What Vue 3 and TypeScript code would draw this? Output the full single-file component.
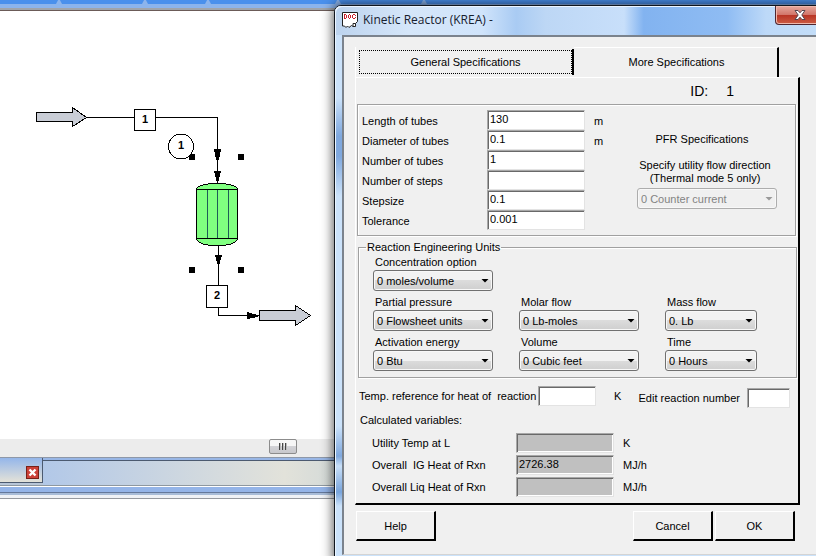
<script setup lang="ts">
import { ref } from 'vue'

interface Field {
  id: string
  label: string
  value: string
  unit: string
}

interface UnitChoice {
  id: string
  label: string
  value: string
}

const geometry = ref<Field[]>([
  { id: 'length', label: 'Length of tubes', value: '130', unit: 'm' },
  { id: 'diameter', label: 'Diameter of tubes', value: '0.1', unit: 'm' },
  { id: 'tubes', label: 'Number of tubes', value: '1', unit: '' },
  { id: 'steps', label: 'Number of steps', value: '', unit: '' },
  { id: 'stepsize', label: 'Stepsize', value: '0.1', unit: '' },
  { id: 'tolerance', label: 'Tolerance', value: '0.001', unit: '' },
])

const units: UnitChoice[] = [
  { id: 'concentration', label: 'Concentration option', value: '0 moles/volume' },
  { id: 'pressure', label: 'Partial pressure', value: '0 Flowsheet units' },
  { id: 'molar', label: 'Molar flow', value: '0 Lb-moles' },
  { id: 'mass', label: 'Mass flow', value: '0. Lb' },
  { id: 'energy', label: 'Activation energy', value: '0 Btu' },
  { id: 'volume', label: 'Volume', value: '0 Cubic feet' },
  { id: 'time', label: 'Time', value: '0 Hours' },
]

const results: Field[] = [
  { id: 'utility', label: 'Utility Temp at L', value: '', unit: 'K' },
  { id: 'ig', label: 'Overall  IG Heat of Rxn', value: '2726.38', unit: 'MJ/h' },
  { id: 'liq', label: 'Overall Liq Heat of Rxn', value: '', unit: 'MJ/h' },
]

const temperature = ref('')
const reactionNumber = ref('')
</script>

<template>
  <div class="desktop">
    <div class="workspace">
      <div class="strip">
        <span class="strip-tab first"></span>
        <span class="strip-tab second"></span>
        <span class="strip-tab third"></span>
        <span class="strip-tab wide"></span>
        <span class="strip-tab last"></span>
      </div>
      <div class="strip-edge"></div>

      <div class="canvas">
        <svg class="flowsheet" width="334" height="428" viewBox="0 11 334 428" shape-rendering="crispEdges">
          <g fill="none" stroke="#000">
            <path d="M86 117.500H217.500V184" />
            <path d="M218.500 244V315.500H260" />
          </g>
          <g fill="#c9cdd6" stroke="#000">
            <path d="M36.500 112.500H72.500V107.500L86.500 117.500L72.500 126.500V121.500H36.500Z" />
            <path d="M259.500 310.500H295.500V305.500L310.500 315.500L295.500 325.500V320.500H259.500Z" />
          </g>
          <g fill="#000">
            <path d="M214 149H221L219 160H216Z" />
            <path d="M214 171H221L218 183H217Z" />
            <path d="M215 255H222L219 266H218Z" />
            <path d="M247 312L258 315V317L247 319Z" />
            <rect x="189" y="154" width="6" height="6" />
            <rect x="238" y="154" width="6" height="6" />
            <rect x="189" y="267" width="6" height="6" />
            <rect x="238" y="267" width="6" height="6" />
          </g>
          <path d="M196.500 189C197 186 205 183.500 217 183.500S237 186 237.500 189V239C236 243 228 245.500 217 245.500S198 243 196.500 239Z" fill="#80ff80" stroke="#000" />
          <path d="M196.500 189.500H237.500M196.500 238.500H237.500" fill="none" stroke="#000" />
          <path d="M207.500 190V238M217.500 190V238M228.500 190V238" fill="none" stroke="#1d5c58" />
          <g fill="#fff" stroke="#000">
            <rect x="134.500" y="109.500" width="21" height="21" />
            <circle cx="181" cy="146.500" r="12.500" />
            <rect x="206.500" y="285.500" width="21" height="22" />
          </g>
          <g class="tag" text-anchor="middle">
            <text x="145" y="123">1</text>
            <text x="181" y="149">1</text>
            <text x="217" y="299">2</text>
          </g>
        </svg>
      </div>

      <div class="scrollbar">
        <div class="thumb"><i></i><i></i><i></i></div>
      </div>

      <div class="taskbar">
        <div class="task">
          <button class="task-close" type="button" aria-label="Close tab">
            <svg width="9" height="9" viewBox="0 0 9 9"><path d="M1.500 1.500L7.500 7.500M7.500 1.500L1.500 7.500" stroke="#fff" stroke-width="2.400" /></svg>
          </button>
        </div>
        <div class="task-rest"></div>
      </div>
      <div class="divider"></div>
      <div class="lower"></div>
    </div>

    <section class="dialog">
      <header class="titlebar">
        <svg class="doc" width="16" height="16" viewBox="0 0 16 16">
          <path d="M.5 .5H15.500V9.500L13.500 11.500V14.500H11L9.500 13.500L7 15.500L5.500 14L4 15.500L2.500 14H.5Z" fill="#fff" stroke="#222" />
          <g fill="none" stroke="#c8202c" shape-rendering="crispEdges">
            <path d="M2.500 2V7M2 2.500H4M2 6.500H4M4.500 3V6" />
            <path d="M6.500 3V6M8.500 3V6M7 2.500H8M7 6.500H8" />
            <path d="M10.500 3V6M11 2.500H13M11 6.500H13M13.500 3V4M13.500 5V6" />
          </g>
          <path d="M11 14V11.500H13.500" fill="none" stroke="#222" />
        </svg>
        <h1>Kinetic Reactor (KREA) -</h1>
        <button class="close" type="button" aria-label="Close">
          <svg width="12" height="10" viewBox="0 0 12 10">
            <path d="M1 .5H4L6 2.800L8 .5H11L7.800 5L11 9.500H8L6 7.200L4 9.500H1L4.200 5Z" fill="#fff" stroke="#55464e" />
          </svg>
        </button>
      </header>

      <div class="client">
        <div class="tabs">
          <button class="tab general" type="button"><span>General Specifications</span></button>
          <button class="tab more" type="button">More Specifications</button>
        </div>

        <div class="page">
          <div class="ident"><span>ID:</span><span>1</span></div>

          <div class="group specs">
            <div class="fields">
              <div v-for="f in geometry" :key="f.id" class="field">
                <label :for="f.id">{{ f.label }}</label>
                <input :id="f.id" v-model="f.value" type="text" />
                <span>{{ f.unit }}</span>
              </div>
            </div>
            <div class="pfr">
              <div>PFR Specifications</div>
              <label for="direction">Specify utility flow direction<br />(Thermal mode 5 only)</label>
              <div class="combo off">
                <select id="direction" disabled><option>0 Counter current</option></select>
                <i></i>
              </div>
            </div>
          </div>

          <fieldset class="group units">
            <legend>Reaction Engineering Units</legend>
            <div class="unit-grid">
              <div v-for="u in units" :key="u.id" class="unit" :class="u.id">
                <label :for="u.id">{{ u.label }}</label>
                <div class="combo">
                  <select :id="u.id"><option>{{ u.value }}</option></select>
                  <i></i>
                </div>
              </div>
            </div>
          </fieldset>

          <div class="extra">
            <label for="temperature">Temp. reference for heat of&nbsp; reaction</label>
            <input id="temperature" v-model="temperature" class="temp" type="text" />
            <span>K</span>
            <label class="edit" for="reaction">Edit reaction number</label>
            <input id="reaction" v-model="reactionNumber" class="number" type="text" />
          </div>

          <div class="caption">Calculated variables:</div>
          <div class="results">
            <div v-for="r in results" :key="r.id" class="result">
              <label :for="r.id">{{ r.label }}</label>
              <input :id="r.id" :value="r.value" type="text" readonly />
              <span>{{ r.unit }}</span>
            </div>
          </div>
        </div>

        <div class="actions">
          <button type="button">Help</button>
          <button class="cancel" type="button">Cancel</button>
          <button type="button">OK</button>
        </div>
      </div>
    </section>
  </div>
</template>

<style>
body {
  margin: 0;
}
</style>

<style scoped>
* {
  box-sizing: border-box;
}
.desktop {
  position: relative;
  min-height: 100vh;
  overflow: hidden;
  background: #fff;
  color: #000;
  font: 11px/14px "Liberation Sans", Arial, sans-serif;
}
button,
input,
select {
  margin: 0;
  border-radius: 0;
  color: inherit;
  font: inherit;
}
.workspace {
  display: flex;
  flex-direction: column;
  height: 100vh;
}
.strip {
  display: flex;
  flex: none;
  height: 8px;
  background: linear-gradient(#4a90ec 4px, #8cb4ec 4px);
}
.strip-tab {
  display: flex;
  justify-content: flex-end;
}
.strip-tab::after {
  width: 6px;
  height: 4px;
  background: #8cb4ec;
  clip-path: polygon(35% 0, 65% 0, 100% 100%, 0 100%);
  content: "";
}
.first { width: 62px; }
.second { width: 86px; }
.third { width: 63px; }
.wide { width: 130px; }
.last { width: 86px; }
.strip-edge {
  flex: none;
  height: 3px;
  border-bottom: 1px solid #6b5b58;
  background: #a0a4aa;
}
.canvas {
  flex: 1;
  min-height: 0;
  overflow: hidden;
}
.flowsheet {
  display: block;
}
.tag {
  font: bold 11px "Liberation Sans", sans-serif;
}
.scrollbar {
  display: flex;
  flex: none;
  height: 18px;
  padding-left: 269px;
  background: #ececec;
}
.thumb {
  display: flex;
  justify-content: center;
  align-items: center;
  gap: 1px;
  width: 28px;
  height: 15px;
  border: 1px solid #8c8c8c;
  border-radius: 2px;
  background: linear-gradient(#f6f6f6 50%, #d2d2d6 50%, #c8c8cc);
}
.thumb i {
  width: 2px;
  height: 7px;
  border-left: 1px solid #444;
  background: #bbb;
}
.taskbar {
  display: flex;
  flex: none;
  height: 29px;
  border-top: 1px solid #8e98a8;
  border-bottom: 1px solid #8e98a0;
  background: linear-gradient(#98b6e6 3px, #b8c6d8 3px);
}
.task {
  display: flex;
  justify-content: flex-end;
  align-items: flex-end;
  width: 43px;
  height: 25px;
  padding: 0 3px 3px 0;
  border-right: 1px solid #4c5a70;
  border-bottom: 1px solid #4c5a70;
  background: linear-gradient(#94b6ea, #e4e2d8);
}
.task-close {
  display: flex;
  justify-content: center;
  align-items: center;
  width: 13px;
  height: 13px;
  padding: 0;
  border: 1px solid #782018;
  background: #cc4038;
}
.task-rest {
  width: 291px;
  margin-top: 2px;
  border-top: 1px solid #4c5a70;
  background: linear-gradient(90deg, #b2c8e8, #e2e2da 83%, #d4dad8);
}
.divider {
  flex: none;
  height: 13px;
  border-bottom: 1px solid #96999f;
  background: linear-gradient(#fff 1px, #94b4e8 1px 6px, #65789a 6px 7px, #a8bcd8 7px 9px, #f0f2f6 9px);
}
.lower {
  flex: none;
  height: 57px;
}
.dialog {
  position: absolute;
  top: 5px;
  right: -10px;
  bottom: -6px;
  left: 334px;
  display: flex;
  flex-direction: column;
  padding: 0 8px 6px 7px;
  border: 1px solid #10161e;
  border-radius: 7px 7px 0 0;
  background:
    linear-gradient(#0000 92px, #7fa8de 130px 150px, #0000 190px) 0 0 / 7px 100% no-repeat,
    linear-gradient(#0000 420px, #7fa8de 450px, #c9e0f8 460px, #78a4dc 486px, #0000 500px) 0 0 / 7px 100% no-repeat,
    #cbe2fa;
  box-shadow: 0 0 12px 1px #000a, inset 1px 1px 0 #eaf5ff;
}
.titlebar {
  display: flex;
  flex: none;
  align-items: flex-start;
  gap: 5px;
  height: 29px;
  margin: 0 -8px 0 -7px;
  padding-left: 7px;
  border-radius: 6px 6px 0 0;
  background: linear-gradient(90deg, #bcd3ee, #d5e6f9 15%, #d0e4fb 30%, #a9cbf3 37%, #bdd7f5 43%, #c8dffa 59%, #82b3f0 63%, #8fbcf3 80%, #bdd9f8 88%, #c4def8);
  box-shadow: inset 1px 1px 0 #edf5ff;
}
.doc {
  margin-top: 6px;
}
h1 {
  flex: 1;
  margin: 5px 0 0;
  color: #16202e;
  font: 12px/18px "Open Sans", "Noto Sans", sans-serif;
}
.close {
  display: flex;
  justify-content: center;
  align-items: center;
  width: 50px;
  height: 19px;
  padding: 0;
  border: 1px solid #4f2630;
  border-top: 0;
  border-radius: 0 0 4px 4px;
  background: linear-gradient(#e6a99e, #d2766a 48%, #b83424 50%, #cc5c44);
  box-shadow: inset 0 0 0 1px #f0b8ac;
}
.client {
  flex: 1;
  padding: 10px 17px 12px 11px;
  border: solid #7b838d;
  border-width: 2px 0 0 2px;
  border-bottom: 1px solid #d4d4d4;
  background: #f0f0f0;
}
.tabs {
  display: flex;
  align-items: flex-end;
  height: 30px;
  border-left: 1px solid #fff;
}
.tab {
  padding: 0;
  border: 0;
  background: #f0f0f0;
}
.general {
  width: 218px;
  height: 26px;
  margin-bottom: 2px;
  padding: 1px 0 1px 3px;
  border-right: 2px solid #000;
}
.general span {
  display: block;
  height: 24px;
  border: 1px dotted #000;
  line-height: 22px;
}
.more {
  flex: 1;
  height: 30px;
  max-width: 205px;
  padding: 0 0 2px 2px;
  border-top: 1px solid #fff;
  border-right: 2px solid #000;
}
.page {
  padding: 5px 1px 6px 1px;
  border: 1px solid #fff;
  border-right: 2px solid #000;
  border-bottom: 2px solid #000;
}
.ident {
  display: flex;
  justify-content: flex-end;
  gap: 18px;
  padding-right: 63px;
  font: 14px/16px "Liberation Sans", sans-serif;
}
.group {
  border: 1px solid #a0a0a0;
  box-shadow: 1px 1px 0 #fff, inset 1px 1px 0 #fff;
}
.specs {
  display: flex;
  margin: 5px 1px 0 0;
  padding: 5px 18px 5px 4px;
}
.field {
  display: grid;
  grid-template-columns: 125px 98px 20px;
  height: 20px;
}
.field label {
  padding-top: 4px;
}
.field span {
  padding: 4px 0 0 9px;
}
input {
  height: 20px;
  padding: 0 2px 2px;
  border: 1px solid;
  border-color: #a8a8a8 #e3e3e3 #e3e3e3 #a8a8a8;
  outline: 0;
  background: #fff;
  box-shadow: inset 1px 1px 0 #696969, inset -1px -1px 0 #fff;
}
.field input {
  width: 98px;
}
.pfr {
  display: flex;
  flex-direction: column;
  align-items: center;
  width: 150px;
  margin-left: auto;
  padding-top: 22px;
  text-align: center;
  white-space: nowrap;
}
.pfr label {
  margin: 13px 0 3px 6px;
  line-height: 13px;
}
.pfr .combo {
  width: 140px;
  margin-left: 10px;
}
.combo {
  display: grid;
}
.combo > * {
  grid-area: 1 / 1;
}
select {
  width: 100%;
  height: 21px;
  padding: 0 18px 0 3px;
  border: 1px solid #707070;
  border-radius: 3px;
  appearance: none;
  background: linear-gradient(#f2f2f2 50%, #dcdcdc 50%, #cfcfcf);
  box-shadow: inset 0 0 0 1px #f8f8f8;
}
.combo i {
  align-self: center;
  justify-self: end;
  width: 8px;
  height: 4px;
  margin-right: 4px;
  background: #000;
  clip-path: polygon(0 0, 100% 0, 50% 100%);
  pointer-events: none;
}
.off select {
  border-color: #adadad;
  background: #f0f0f0;
  color: #838383;
  opacity: 1;
}
.off i {
  background: #999;
}
.units {
  min-width: 0;
  margin: 4px 0 0 1px;
  padding: 0 39px 5px 14px;
}
legend {
  margin-left: -7px;
  padding: 0 1px;
}
.unit-grid {
  display: grid;
  grid-template-columns: 120px 120px 92px;
  column-gap: 26px;
  row-gap: 2px;
}
.unit {
  height: 38px;
}
.concentration {
  grid-column: 1 / -1;
}
.concentration .combo {
  width: 120px;
}
.unit label {
  display: block;
  height: 16px;
  padding: 1px 0 0 2px;
}
.extra {
  display: flex;
  align-items: flex-start;
  height: 27px;
  margin-top: 8px;
  padding: 0 7px 0 1px;
}
.extra > label:first-child {
  width: 180px;
  padding: 3px 0 0 1px;
  white-space: nowrap;
}
.temp {
  width: 58px;
}
.extra span {
  padding: 3px 0 0 18px;
}
.edit {
  margin-left: auto;
  padding-top: 5px;
}
.number {
  width: 43px;
  margin: 2px 0 0 7px;
}
.caption {
  padding-left: 3px;
}
.results {
  display: grid;
  gap: 2px;
  margin-top: 6px;
  padding-left: 15px;
}
.result {
  display: grid;
  grid-template-columns: 144px 98px auto;
  height: 20px;
}
.result label {
  padding-top: 3px;
  white-space: pre;
}
.result span {
  padding: 3px 0 0 9px;
}
.result input {
  background: #c0c0c0;
}
.actions {
  display: flex;
  gap: 2px;
  margin: 6px 5px 0 1px;
}
.actions button {
  width: 80px;
  height: 30px;
  padding: 0;
  border: solid;
  border-width: 1px 2px 2px 1px;
  border-color: #fff #000 #000 #fff;
  background: #f0f0f0;
}
.cancel {
  margin-left: auto;
}
</style>
